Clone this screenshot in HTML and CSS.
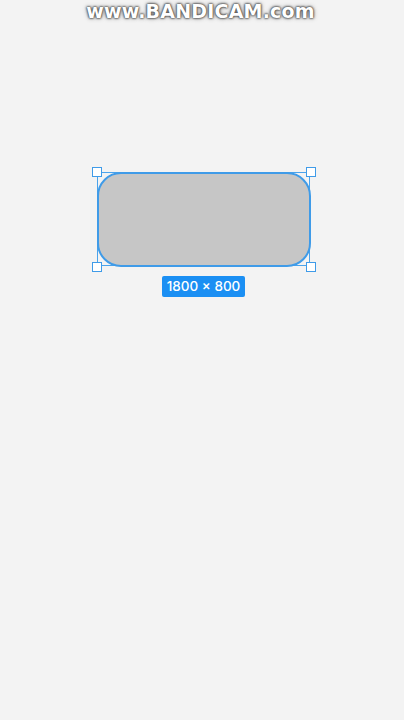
FILE: index.html
```html
<!DOCTYPE html>
<html>
<head>
<meta charset="utf-8">
<link rel="stylesheet" href="styles.css">
</head>
<body>
<div class="watermark">www.BANDICAM.com</div>
<div class="canvas">
  <div class="group">
    <div class="frame">
      <div class="shape"></div>
      <span class="handle tl"></span>
      <span class="handle tr"></span>
      <span class="handle bl"></span>
      <span class="handle br"></span>
    </div>
    <div class="size">1800 × 800</div>
  </div>
</div>
</body>
</html>
```
FILE: styles.css
```css
html, body {
  margin: 0;
  padding: 0;
}
body {
  width: 404px;
  height: 720px;
  background: #f3f3f3;
  position: relative;
  overflow: hidden;
  font-family: Inter, "Noto Sans", sans-serif;
}
.watermark {
  position: absolute;
  top: 0;
  left: 0;
  width: 401px;
  text-align: center;
  font-family: "DejaVu Sans", sans-serif;
  font-weight: bold;
  font-size: 19px;
  letter-spacing: 0.2px;
  color: #ffffff;
  text-shadow: 0 0 2px #444, 0 0 2px #555, 0 0 3px #777, 0 0 5px #999;
}
.canvas {
  padding-top: 172px;
  padding-left: 97px;
}
.group {
  width: 213px;
  display: flex;
  flex-direction: column;
  align-items: center;
}
.frame {
  position: relative;
  width: 213px;
  height: 94px;
  box-sizing: border-box;
  border: 1.5px solid #4aa3ec;
}
.shape {
  margin: -1.5px;
  width: calc(100% + 3px);
  height: calc(100% + 3px);
  box-sizing: border-box;
  background: #c6c6c6;
  border: 2px solid #3f9be8;
  border-radius: 24px;
}
.handle {
  position: absolute;
  width: 8px;
  height: 8px;
  background: #ffffff;
  border: 1.5px solid #3f9be8;
}
.tl { left: -6.5px; top: -6.5px; }
.tr { right: -6.5px; top: -6.5px; }
.bl { left: -6.5px; bottom: -6.5px; }
.br { right: -6.5px; bottom: -6.5px; }
.size {
  margin-top: 10px;
  background: #1b8ff3;
  color: #ffffff;
  font-size: 13.5px;
  font-weight: 500;
  line-height: 21px;
  height: 21px;
  padding: 0 5px;
  border-radius: 2px;
}
```
